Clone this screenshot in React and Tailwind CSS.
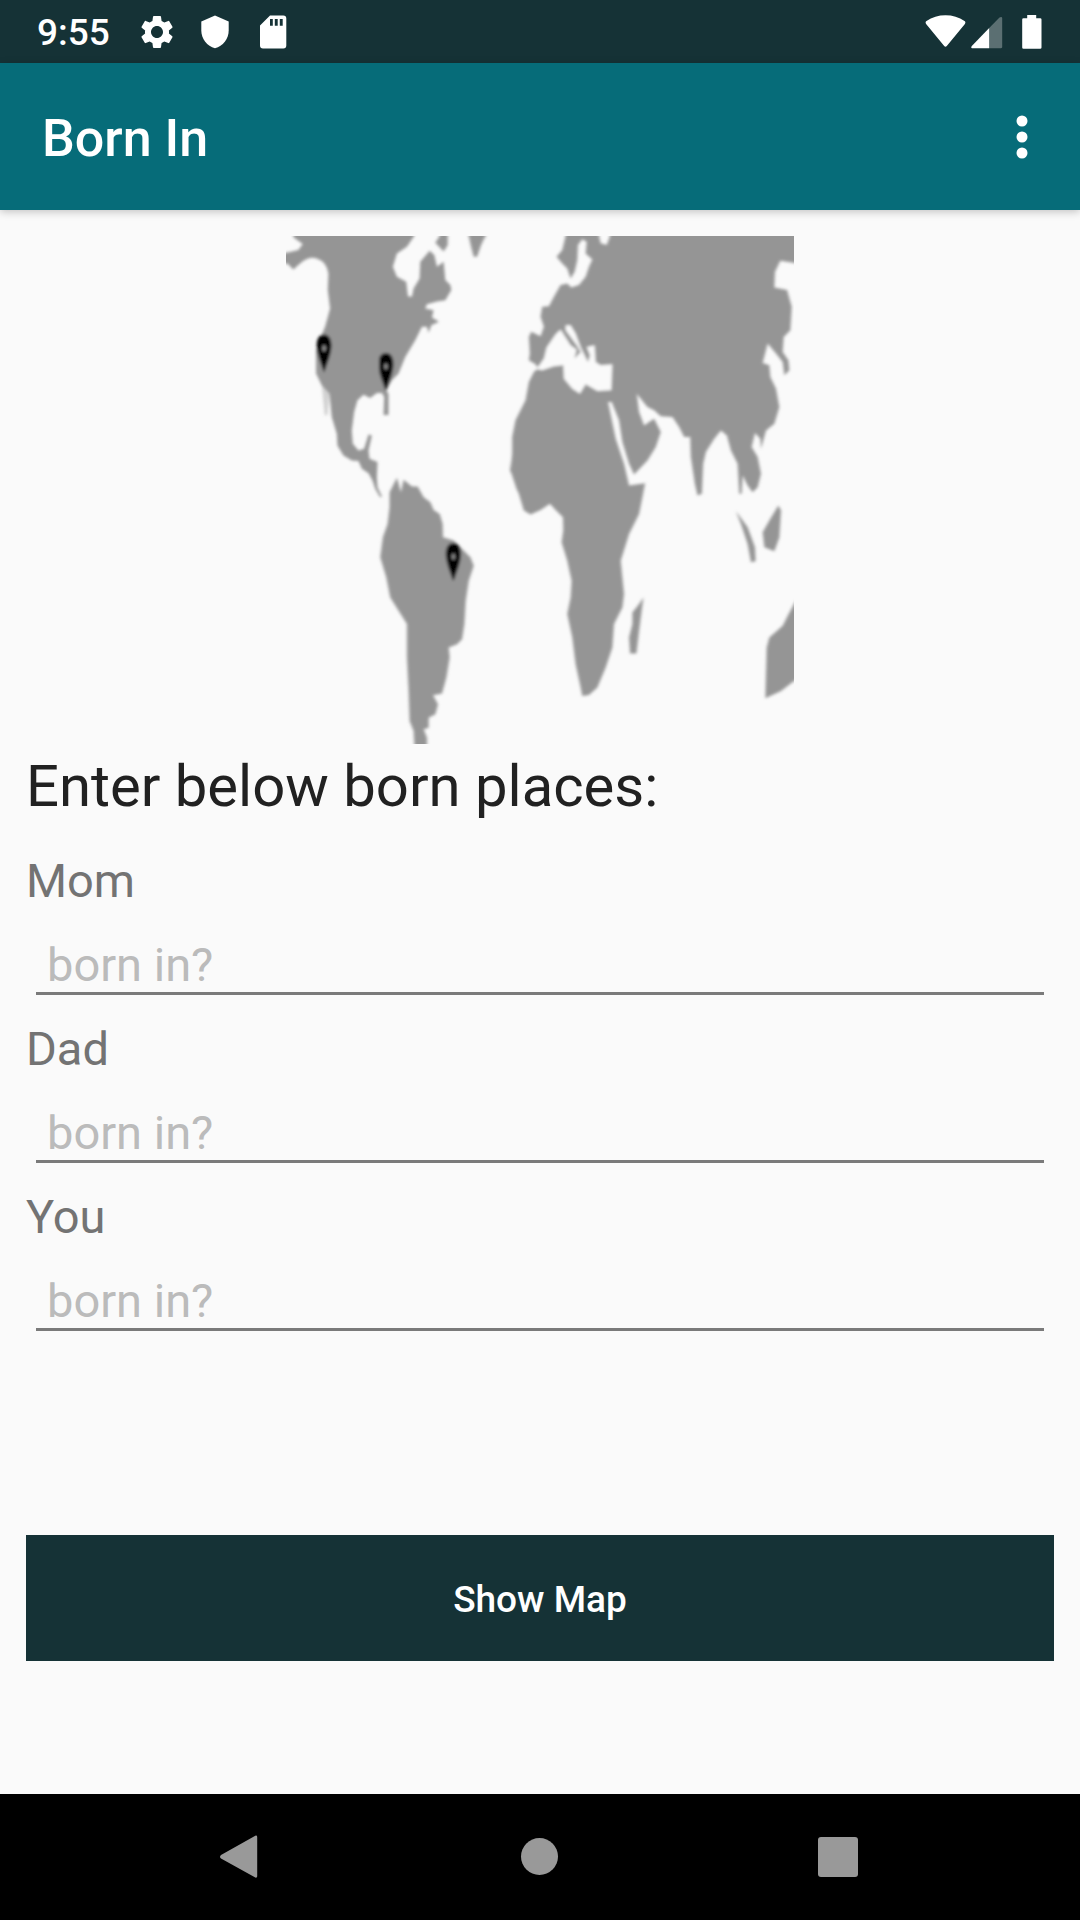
import React from "react";
import { MdSettings } from "react-icons/md";

const people = ["Mom", "Dad", "You"];

function ShieldIcon() {
  return (
    <svg className="h-10 w-10" viewBox="0 0 40 40" fill="white" aria-hidden="true">
      <path d="M20 3.500 33.700 9.500V18.500c0 8.500-5.800 15.500-13.700 17.800C12.100 34 6.300 27 6.300 18.500V9.500Z" />
    </svg>
  );
}

function SdCardIcon() {
  return (
    <svg className="h-10 w-10" viewBox="0 0 40 40" fill="white" aria-hidden="true">
      <path
        fillRule="evenodd"
        d="M17 3.500H30.300a3 3 0 0 1 3 3V33.500a3 3 0 0 1-3 3H10a3 3 0 0 1-3-3V13.500ZM17 7v6.800h2.800V7ZM21.800 7v6.800h2.900V7ZM26.800 7v6.800h2.900V7Z"
      />
    </svg>
  );
}

function WifiIcon() {
  return (
    <svg className="h-[34px] w-[41px]" viewBox="0 0 41 34" fill="white" aria-hidden="true">
      <path d="M20.500 0.300c7 0 13.500 2 19 5.800 1 .7 1.200 1.700.4 2.800L21.800 31c-.9 1-1.800 1-2.600 0L1.100 8.900c-.8-1.100-.6-2.100.4-2.800 5.500-3.800 12-5.800 19-5.800Z" />
    </svg>
  );
}

function SignalIcon() {
  return (
    <svg className="h-[34px] w-[32px]" viewBox="0 0 32 34" fill="white" aria-hidden="true">
      <path d="M18.200 13 28.500 2.600c1.400-1.200 2.700-.8 2.700.8V32c0 .7-.5 1.200-1.200 1.200H18.200Z" opacity="0.3" />
      <path d="M18.200 13V33.200H1.500c-1.300 0-1.700-1.200-.7-2.300Z" />
    </svg>
  );
}

function BatteryIcon() {
  return (
    <svg className="h-[34px] w-5" viewBox="0 0 20 34" fill="white" aria-hidden="true">
      <path d="M5.200 0H14.200V3.300H18.200a1.300 1.300 0 0 1 1.300 1.300V32.500a1.300 1.300 0 0 1-1.300 1.300H1.500A1.300 1.300 0 0 1 .2 32.500V4.600A1.300 1.300 0 0 1 1.500 3.300H5.200Z" />
    </svg>
  );
}

function MapPin({ x, y }) {
  return (
    <g transform={`translate(${x} ${y})`}>
      <path d="M0-57C14-57 22-44 22-24C22 0 10 28 0 57C-10 28-22 0-22-24C-22-44-14-57 0-57Z" fill="#050505" />
      <ellipse cy="-16" rx="5" ry="9" fill="#959595" />
    </g>
  );
}

function WorldMap() {
  return (
    <svg
      className="mx-auto block aspect-square w-1/2 max-w-[508px] overflow-hidden"
      viewBox="18 18 1521 1521"
      role="img"
      aria-label="World map with pins"
    >
      <defs>
        <filter id="soften" x="-5%" y="-5%" width="110%" height="110%">
          <feGaussianBlur stdDeviation="5" />
        </filter>
      </defs>
      <g filter="url(#soften)" fill="#959595">
        {/* North and Central America */}
        <path d="M40 0V22L68 42 55 60 30 66 0 72V100H22L40 118 60 100Q85 78 110 85 140 95 145 130L143 180 150 235 135 290 118 330 108 360V430L125 465 148 490 155 560 170 610 172 645 190 675 215 690 235 692 245 715 265 728 277 750 285 775 300 800 305 798 292 770 290 740 292 695 268 685 265 660 275 615 265 612 252 655 235 660 218 640 215 600 222 545 232 510 250 493 270 503 290 488 305 488 312 500 310 554H325V490L318 480 335 450 355 430 375 380 405 330 425 290 440 290 445 308 453 285 476 275 455 262 460 240 435 235 440 222 470 214 495 210 513 180 510 165 495 150 490 95 470 110 462 75 448 62 420 95 418 145 400 175 395 200 383 198 378 155 350 140 338 110 350 70 380 50 402 18V0Z" />
        <path d="M125 465 134 555H142L148 490Z" opacity="0.4" />
        {/* Arctic islands */}
        <path d="M478 0V18L465 38 490 64 502 45V0Z" />
        <path d="M562 0 565 18 572 50 580 80H590L602 45 615 18V0Z" />
        {/* South America */}
        <path d="M328 785 350 742 362 785 370 748 395 768 412 768 430 800 450 815 460 838 478 850 487 880 488 920 520 930 545 955 570 980 580 1005 565 1050 556 1110 552 1180 545 1225 530 1240 505 1250 508 1280 498 1340 485 1388 458 1393 473 1420 465 1450 445 1460V1490L430 1495 440 1520V1560H403L400 1500 388 1470 385 1380 380 1280V1180L355 1140 330 1100 318 1040 300 980 308 920 322 880 328 830Z" />
        {/* Europe, Asia and Africa */}
        <g transform="translate(660 0)">
          <path d="M195 0V18L185 60 168 80 185 100 200 115 210 145 222 125 230 90 232 45 245 28 258 35 255 70 275 88 265 110 255 140 235 165 212 172 200 160 180 165 160 200 145 228 125 230 120 260 130 290 120 318 92 305 85 320 88 370 85 390 105 402 112 415 100 425 85 455 75 510 45 570 35 620V670L30 720 48 775 55 790 70 840 90 852 120 838 148 820 165 838 187 860 188 900 183 935 200 990 213 1050 210 1100 200 1150 215 1220 225 1300 238 1360 245 1395 265 1392 290 1370 315 1310 335 1250 340 1180 365 1130 370 1090 360 990 385 910 415 850 425 800 433 758 385 765 370 700 345 625 322 515 333 515 355 570 365 635 385 700 400 732 440 690 465 650 480 605 460 565 445 575 430 585 415 545 408 490 420 505 440 530 460 540 480 558 515 560 535 590 550 620 568 620 570 680 582 760 590 795 603 790 607 700 615 665 640 625 660 600 678 615 690 660 710 700 715 790H722L725 735 740 765 755 785 770 770 780 730 770 680 752 650 762 608 778 625 780 655 795 600 820 580 835 530 825 475 808 440 805 405 785 398 800 340 825 370 845 395 850 435 865 420 862 390 845 365 848 320 868 300 872 230 858 180 820 172 822 125 838 92 920 105V0H328V18L318 45 300 40 295 18V0Z" />
          <path
            fill="#fafafa"
            d="M108 416 130 385 138 352 165 312 180 298 210 345 228 358 222 385 240 365 228 345 195 300V285H210L225 310 240 350 262 395 268 375 258 350 282 345 285 395 300 405 335 402 332 480 290 482 255 462 238 490 215 475 190 445 188 405 160 408 125 420Z"
          />
          <path d="M428 1100 415 1120 395 1145V1180L385 1220 388 1268H407L415 1200Z" />
          <path d="M705 842 720 880 740 940 750 995 764 992 762 950 740 890Z" />
          <path d="M832 825 805 870 785 905 790 950 820 962 835 920 840 840Z" />
          <path d="M920 1060 879 1120 860 1155 845 1185 805 1220 797 1250 793 1402 840 1380 879 1350 920 1330Z" />
        </g>
        <MapPin x={132} y={370} />
        <MapPin x={317} y={425} />
        <MapPin x={519} y={994} />
      </g>
    </svg>
  );
}

function StatusBar() {
  return (
    <div className="flex h-[63px] items-center bg-[#153236] pr-[38px] pl-[37px] text-white">
      <span className="pt-[3px] text-[37px] leading-[44px] font-medium">9:55</span>
      <div className="ml-[27px] flex gap-[18px]">
        <MdSettings className="h-10 w-10" aria-hidden="true" />
        <ShieldIcon />
        <SdCardIcon />
      </div>
      <div className="ml-auto flex items-center">
        <WifiIcon />
        <span className="ml-[5px]">
          <SignalIcon />
        </span>
        <span className="ml-[19px]">
          <BatteryIcon />
        </span>
      </div>
    </div>
  );
}

function Field({ name }) {
  const id = name.toLowerCase();
  return (
    <div className="flex flex-col">
      <label htmlFor={id} className="text-[47px] leading-[56px] text-[#737373]">
        {name}
      </label>
      <input
        id={id}
        type="text"
        placeholder="born in?"
        className="mx-[10px] mt-7 h-[58px] rounded-none border-b-[3px] border-[#7a7a7a] bg-transparent px-[11px] text-[47px] leading-[55px] text-[#212121] outline-none placeholder:text-[#bbbbbb]"
      />
    </div>
  );
}

export default function App() {
  return (
    <div className="flex min-h-screen flex-col bg-[#fafafa] font-[Roboto,sans-serif]">
      <StatusBar />
      <header className="flex h-[147px] items-center justify-between bg-[#066c79] pr-[38px] pl-[42px] text-white shadow-[0_2px_8px_rgba(0,0,0,0.22)]">
        <h1 className="pt-1 text-[52px] leading-[62px] font-medium">Born In</h1>
        <button type="button" aria-label="More options">
          <svg className="block h-12 w-10" viewBox="0 0 40 48" fill="white" aria-hidden="true">
            <circle cx="20" cy="8" r="5.500" />
            <circle cx="20" cy="24" r="5.500" />
            <circle cx="20" cy="40" r="5.500" />
          </svg>
        </button>
      </header>
      <main className="flex grow flex-col px-[26px] pt-[26px] pb-8">
        <WorldMap />
        <h2 className="mt-2 text-[58px] leading-[68px] text-[#212121]">Enter below born places:</h2>
        <form className="mt-[33px] flex flex-col gap-[26px]" onSubmit={(e) => e.preventDefault()}>
          {people.map((name) => (
            <Field key={name} name={name} />
          ))}
          <button
            type="submit"
            className="mt-[178px] h-[126px] bg-[#153236] pt-1 text-[37px] leading-[44px] font-medium text-white"
          >
            Show Map
          </button>
        </form>
      </main>
      <nav className="flex h-[126px] items-center justify-center bg-black">
        <button type="button" aria-label="Back" className="flex w-[300px] justify-center">
          <svg className="h-12 w-12" viewBox="0 0 48 48" fill="#999999" aria-hidden="true">
            <path d="M38.400 3.200c1.500-1.200 2.800-.8 2.800 1V43c0 1.800-1.300 2.200-2.800 1L5 25.500c-1.300-1-1.300-2.500 0-3.600Z" />
          </svg>
        </button>
        <button type="button" aria-label="Home" className="flex w-[300px] justify-center">
          <svg className="h-12 w-12" viewBox="0 0 48 48" fill="#999999" aria-hidden="true">
            <circle cx="23.500" cy="23.500" r="18.500" />
          </svg>
        </button>
        <button type="button" aria-label="Recent apps" className="flex w-[300px] justify-center">
          <svg className="h-12 w-12" viewBox="0 0 48 48" fill="#999999" aria-hidden="true">
            <rect x="2" y="4" width="40" height="40" rx="3" />
          </svg>
        </button>
      </nav>
    </div>
  );
}
